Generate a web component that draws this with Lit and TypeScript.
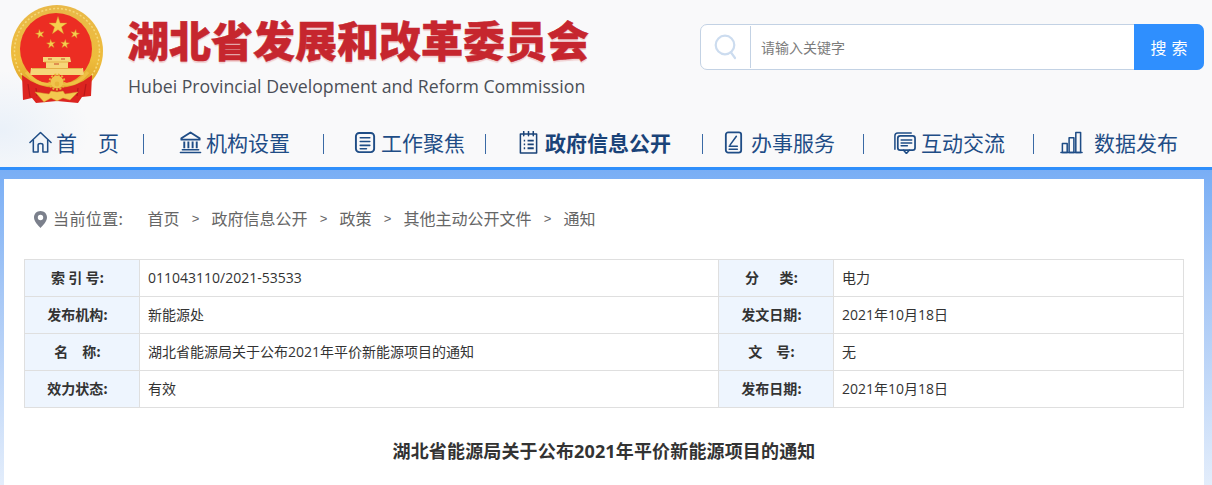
import { LitElement, html, css, svg } from "lit";
import { customElement } from "lit/decorators.js";

function star(cx: number, cy: number, r: number, rot = 0) {
  const pts: string[] = [];
  for (let i = 0; i < 10; i++) {
    const rad = i % 2 === 0 ? r : r * 0.382;
    const a = -Math.PI / 2 + (i * Math.PI) / 5 + rot;
    pts.push(`${(cx + rad * Math.cos(a)).toFixed(2)},${(cy + rad * Math.sin(a)).toFixed(2)}`);
  }
  return svg`<polygon points=${pts.join(" ")} fill="#f6cf4e" stroke="#d9962a" stroke-width=".4"/>`;
}

const emblem = html`<svg class="emblem" viewBox="0 0 120 115" width="120" height="115">
  <defs>
    <linearGradient id="gold" x1="0" y1="0" x2="0" y2="1">
      <stop offset="0" stop-color="#e9b949"/><stop offset=".6" stop-color="#eebc3c"/><stop offset="1" stop-color="#d99a22"/>
    </linearGradient>
  </defs>
  <circle cx="57" cy="51" r="46" fill="url(#gold)"/>
  <circle cx="57" cy="51" r="42.5" fill="none" stroke="#f6d878" stroke-width="1.5" stroke-dasharray="2 2"/>
  <circle cx="56" cy="49" r="36" fill="#ec2d23"/>
  ${star(58, 26, 9.5)}${star(40, 34, 4.6, -0.2)}${star(75, 34, 4.6, 0.2)}${star(51, 44, 4.6, -0.1)}${star(65, 44, 4.6, 0.1)}
  <path d="M43 57 H70 L71 62 H68 V68 H83 L84 75 H30 L31 68 H46 V62 H43 Z" fill="#f6d679"/>
  <path d="M44 62 H69 M32 68.5 H82" stroke="#e0a73c" stroke-width=".8"/>
  <path d="M48 59 H52 M61 59 H65 M54 64 H59" stroke="#c9492a" stroke-width="1"/>
  <path d="M22 75 Q38 88 57 88 Q76 88 92 75 L91 96 L82 97 L78 103 L57 101 L36 103 L32 98 L23 100 Z" fill="#dc2420"/>
  <path d="M28 84 L30 97 M36 88 L37 96 M86 84 L84 96 M78 88 L77 96" stroke="#b9181a" stroke-width="1.2"/>
  <path d="M26 72 Q37 86 50 84 H64 Q77 86 88 72" fill="none" stroke="#efbf43" stroke-width="3.2"/>
  <circle cx="57" cy="82" r="6.5" fill="#f0c44c"/>
  <circle cx="57" cy="82" r="7.5" fill="none" stroke="#e9b53a" stroke-width="2" stroke-dasharray="2 1.6"/>
  <circle cx="57" cy="84" r="2.4" fill="#e9b53a"/>
  <path d="M35 92 L49 94 L51 91 L57 92 L63 91 L65 94 L78 92 L70 100 L63 98 L57 101 L51 98 L44 102 Z" fill="#f3c94f" stroke="#d3962a" stroke-width=".5"/>
</svg>`;

const s = (inner: unknown, vb = "0 0 24 24") =>
  html`<svg class="ico" viewBox=${vb} fill="none" stroke="currentColor" stroke-width="1.6" stroke-linejoin="round" stroke-linecap="round">${inner}</svg>`;

const icons = {
  home: s(svg`<path d="M1 12 L12 1.5 L23 12"/><path d="M4.5 9.5 V22 H9.5 V14.5 Q9.5 13 12 13 Q14.5 13 14.5 14.5 V22 H19.5 V9.5"/>`),
  bank: s(svg`<path d="M2.5 7.5 L12 1.5 L21.5 7.5 V9 H2.5 Z" stroke-width="2"/><path d="M5.5 11 V18 M9.8 11 V18 M14.2 11 V18 M18.5 11 V18" stroke-width="2" stroke-linecap="butt"/><path d="M3.5 19.5 H20.5 M1.5 22.5 H22.5" stroke-width="1.6"/>`),
  doc: s(svg`<rect x="2" y="2" width="19" height="20" rx="3.5" stroke-width="2"/><path d="M6.5 7 H16.5 M6.5 11 H16.5 M6.5 15 H16.5 M6.5 18.5 H13"/>`),
  list: s(svg`<rect x="2.5" y="3" width="17" height="20" stroke-width="1.6"/><path d="M6 .5 V5 M11 .5 V5 M16 .5 V5"/><path d="M6 10 H7.5 M10 10 H16.5 M6 14 H7.5 M10 14 H16.5 M6 18 H7.5 M10 18 H16.5" stroke-width="2" stroke-linecap="butt"/>`, "0 0 22 24"),
  task: s(svg`<rect x="1.5" y="1.5" width="16" height="21" rx="2.5" stroke-width="1.9"/><path d="M12.5 5.5 L6 14.5 M5 15.8 H13.5 M5 19 H13.5" stroke-width="1.6"/>`, "0 0 19 24"),
  chat: s(svg`<path d="M2 19 V5 Q2 2 5 2 H19"/><rect x="5" y="5" width="18" height="15" rx="2.5" stroke-width="1.8"/><path d="M11 20 L14 23.5 L17 20"/><path d="M8.5 9.5 H19.5 M8.5 12.5 H19.5 M8.5 15.5 H15"/>`),
  chart: s(svg`<path d="M1 22.5 H23" stroke-width="1.6"/><rect x="2.5" y="13" width="5" height="9.5"/><rect x="9.5" y="7" width="5" height="15.5"/><rect x="16.5" y="1.5" width="5" height="21"/>`),
};

const nav = [
  { icon: icons.home, html: html`<span class="wide">首</span><span>页</span>` },
  { icon: icons.bank, html: "机构设置" },
  { icon: icons.doc, html: "工作聚焦" },
  { icon: icons.list, html: "政府信息公开", active: true },
  { icon: icons.task, html: "办事服务" },
  { icon: icons.chat, html: "互动交流" },
  { icon: icons.chart, html: "数据发布" },
];

const crumbs = ["首页", "政府信息公开", "政策", "其他主动公开文件", "通知"];

const rows = [
  ["索 引 号:", "011043110/2021-53533", "分　\u00a0\u00a0类:", "电力"],
  ["发布机构:", "新能源处", "发文日期:", "2021年10月18日"],
  ["名　称:", "湖北省能源局关于公布2021年平价新能源项目的通知", "文　号:", "无"],
  ["效力状态:", "有效", "发布日期:", "2021年10月18日"],
];

@customElement("app-root")
export class AppRoot extends LitElement {
  static styles = css`
    :host {
      display: block;
      width: 1212px;
      height: 485px;
      overflow: hidden;
      font-family: "Noto Sans CJK SC", "Noto Sans", sans-serif;
      background: linear-gradient(180deg, #79aef5 170px, #a9c9f6 300px, #e3edfb 485px);
    }
    .top {
      height: 167px;
      background: radial-gradient(90px 60px at 0 130px, #eaf1f9, transparent), #f9f9fa;
      border-bottom: 3px solid #308ffb;
      box-sizing: content-box;
    }
    .head {
      height: 115px;
      display: flex;
      align-items: flex-start;
    }
    .emblem { flex: none; display: block; }
    .brand { margin: 12px 0 0 7px; width: 573px; }
    .cn {
      font-size: 42px;
      line-height: 54px;
      font-weight: 900;
      color: #c6262e;
      white-space: nowrap;
      text-shadow: 0 2px 1px #f0cfd0;
      -webkit-text-stroke: 0.5px #c6262e;
    }
    .en {
      margin-top: 8px;
      margin-left: 1px;
      font-family: "Open Sans", sans-serif;
      font-size: 17.7px;
      line-height: 24px;
      color: #4b4f57;
      white-space: nowrap;
    }
    .search {
      margin-top: 24px;
      width: 504px;
      height: 46px;
      box-sizing: border-box;
      border: 1px solid #c3d2e4;
      border-radius: 7px;
      background: #fff;
      display: flex;
      align-items: center;
    }
    .sicon {
      width: 49px;
      height: 42px;
      flex: none;
      border-right: 1px solid #c3d2e4;
      display: flex;
      align-items: center;
      justify-content: center;
      box-sizing: content-box;
    }
    .sicon svg { width: 24px; height: 26px; display: block; }
    .ph { flex: 1; padding-left: 10px; font-size: 14px; color: #7c7c7c; }
    .btn {
      width: 70px;
      height: 46px;
      margin: -1px -1px -1px 0;
      background: #2f8ffe;
      border-radius: 0 7px 7px 0;
      color: #fff;
      font-size: 16px;
      letter-spacing: 5px;
      text-indent: 5px;
      display: flex;
      align-items: center;
      justify-content: center;
      flex: none;
    }
    nav {
      display: grid;
      grid-template-columns: 144px 180px 162px 217px 161px 170px 1fr;
      height: 52px;
      padding-top: 2px;
      box-sizing: border-box;
      color: #1f4d86;
    }
    .item {
      display: flex;
      align-items: center;
      height: 50px;
      font-size: 21px;
      white-space: nowrap;
      position: relative;
      box-sizing: border-box;
    }
    .item:not(:last-child)::after {
      content: "";
      position: absolute;
      right: 0;
      top: 17px;
      width: 1px;
      height: 20px;
      background: #3a6aa5;
    }
    .ico { flex: none; display: block; }
    .item .ico { width: 23px; height: 23px; margin-right: 5px; }
    .item:nth-child(1) { padding-left: 29px; }
    .item:nth-child(1) .ico { margin-right: 4px; }
    .item:nth-child(2) { padding-left: 35px; }
    .item:nth-child(2) .ico { margin-right: 4px; }
    .item:nth-child(3) { padding-left: 30px; }
    .item:nth-child(3) .ico { margin-right: 4px; }
    .item:nth-child(4) { padding-left: 32px; }
    .item:nth-child(5) { padding-left: 21px; }
    .item:nth-child(6) { padding-left: 29px; }
    .item:nth-child(7) { padding-left: 26px; }
    .item:nth-child(7) .ico { margin-right: 11px; }
    .item:nth-child(4) .ico { width: 21px; margin-right: 6px; }
    .item:nth-child(5) .ico { width: 19px; margin-right: 8px; }
    .item .wide { margin-right: 21px; }
    .item.active { font-weight: 700; font-size: 21px; color: #1a4378; }
    .card {
      margin: 9px 8px 0 4px;
      background: #fff;
      height: 310px;
      padding: 0 20px;
      box-sizing: border-box;
      color: #333;
    }
    .crumbs {
      height: 80px;
      display: flex;
      align-items: center;
      padding: 0 0 2px 10px;
      box-sizing: border-box;
      font-size: 16px;
      color: #666;
      white-space: nowrap;
    }
    .pin { width: 13px; height: 17px; margin-right: 6px; flex: none; margin-top: 2px; }
    .here { margin-right: 24px; letter-spacing: 0.4px; }
    .sep { font-size: 13px; margin: 0 11.5px; width: 9px; text-align: center; font-family: "Liberation Sans", sans-serif; }
    table {
      width: 1159px;
      border-collapse: collapse;
      table-layout: fixed;
    }
    td {
      border: 1px solid #dfdfdf;
      height: 36px;
      padding: 0 8px 2px;
      font-family: "Open Sans", "Noto Sans CJK SC", sans-serif;
      font-size: 14px;
      color: #333;
      white-space: nowrap;
      box-sizing: border-box;
    }
    td.l {
      background: #eef5fe;
      font-family: "Noto Sans CJK SC", sans-serif;
      font-weight: 700;
      text-align: center;
      padding: 0 9px 2px 0;
    }
    tr { height: 37px; }
    .title {
      text-align: center;
      font-family: "Open Sans", "Noto Sans CJK SC", sans-serif;
      font-size: 18px;
      font-weight: 700;
      letter-spacing: 0.15px;
      color: #333;
      margin-top: 29px;
      line-height: 28px;
    }
  `;

  render() {
    return html`
      <div class="top">
        <div class="head">
          ${emblem}
          <div class="brand">
            <div class="cn">湖北省发展和改革委员会</div>
            <div class="en">Hubei Provincial Development and Reform Commission</div>
          </div>
          <div class="search">
            <div class="sicon">
              <svg viewBox="0 0 24 26" fill="none" stroke="#ccdcef" stroke-width="2.2" stroke-linecap="round">
                <circle cx="11" cy="11" r="9.3"/><path d="M17 18.5 L21 24"/>
              </svg>
            </div>
            <div class="ph">请输入关键字</div>
            <div class="btn">搜索</div>
          </div>
        </div>
        <nav>
          ${nav.map(
            (n) => html`<div class="item ${n.active ? "active" : ""}">${n.icon}${n.html}</div>`
          )}
        </nav>
      </div>
      <div class="card">
        <div class="crumbs">
          <svg class="pin" viewBox="0 0 13 17">
            <path fill-rule="evenodd" fill="#7b808c" d="M6.5 0 C10.2 0 13 2.8 13 6.4 C13 10.5 8.5 14.6 6.5 17 C4.5 14.6 0 10.5 0 6.4 C0 2.8 2.8 0 6.5 0 Z M6.5 3.8 A2.7 2.7 0 1 0 6.5 9.2 A2.7 2.7 0 1 0 6.5 3.8 Z"/>
          </svg>
          <span class="here">当前位置:</span>
          ${crumbs.map(
            (c, i) => html`${i ? html`<span class="sep">&gt;</span>` : ""}<span>${c}</span>`
          )}
        </div>
        <table>
          <colgroup><col style="width:115px" /><col style="width:579px" /><col style="width:115px" /><col style="width:350px" /></colgroup>
          ${rows.map(
            (r) => html`<tr>
              <td class="l">${r[0]}</td><td>${r[1]}</td><td class="l">${r[2]}</td><td>${r[3]}</td>
            </tr>`
          )}
        </table>
        <div class="title">湖北省能源局关于公布2021年平价新能源项目的通知</div>
      </div>
    `;
  }
}
